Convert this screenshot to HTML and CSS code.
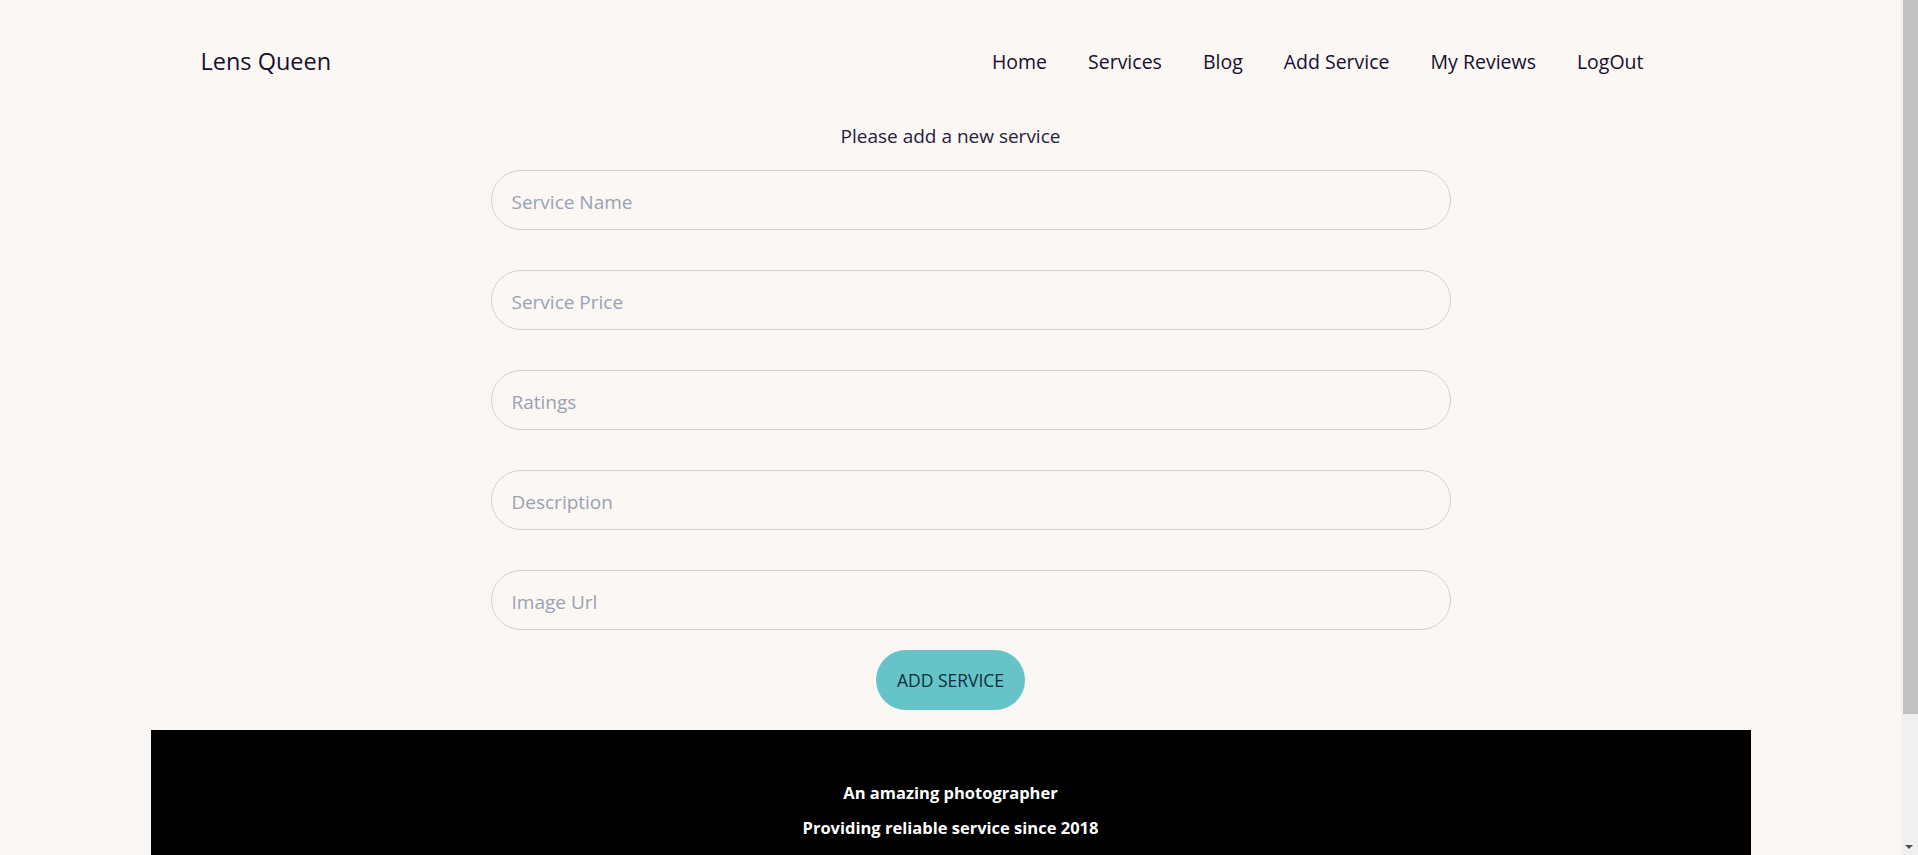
FILE: index.html
```html
<!DOCTYPE html>
<html lang="en">
<head>
<meta charset="utf-8">
<title>Lens Queen - Add Service</title>
<link rel="stylesheet" href="styles.css">
</head>
<body>
<div class="page">
  <header class="navbar">
    <a class="brand" href="#">Lens Queen</a>
    <nav class="menu">
      <a href="#">Home</a>
      <a href="#">Services</a>
      <a href="#">Blog</a>
      <a href="#">Add Service</a>
      <a href="#">My Reviews</a>
      <a href="#">LogOut</a>
    </nav>
  </header>
  <main class="content">
    <p class="title">Please add a new service</p>
    <form class="form">
      <input class="field" type="text" placeholder="Service Name">
      <input class="field" type="text" placeholder="Service Price">
      <input class="field" type="text" placeholder="Ratings">
      <input class="field" type="text" placeholder="Description">
      <input class="field" type="text" placeholder="Image Url">
      <button class="submit" type="button">ADD SERVICE</button>
    </form>
  </main>
  <footer class="footer">
    <p>An amazing photographer</p>
    <p>Providing reliable service since 2018</p>
  </footer>
</div>
<div class="scrollbar" aria-hidden="true">
  <div class="scroll-thumb"></div>
  <div class="scroll-arrow"></div>
</div>
</body>
</html>
```

FILE: styles.css
```css
* { box-sizing: border-box; }
html, body {
  margin: 0;
  padding: 0;
  background: #faf7f5;
}
body {
  font-family: "Open Sans", "Noto Sans", sans-serif;
  color: #1c1631;
  padding-right: 17px;
}
.page {
  max-width: 1600px;
  margin: 0 auto;
}
.navbar {
  display: flex;
  align-items: center;
  justify-content: space-between;
  height: 80px;
  margin-top: 21px;
  padding: 0 107px 0 50px;
}
.brand {
  font-size: 23.5px;
  color: #170f2c;
  text-decoration: none;
}
.menu {
  display: flex;
  gap: 41px;
}
.menu a {
  font-size: 19.5px;
  font-weight: 500;
  color: #170f2c;
  text-decoration: none;
}
.content {
  display: flex;
  flex-direction: column;
  align-items: center;
}
.title {
  margin: 20px 0 19px;
  font-size: 19px;
  line-height: 30px;
  color: #25223a;
}
.form {
  width: 1000px;
  display: flex;
  flex-direction: column;
  align-items: center;
  gap: 40px;
}
.field {
  width: 960px;
  height: 60px;
  margin-left: 40px;
  padding: 4px 20px 0;
  border: 1px solid #d3cfd0;
  border-radius: 30px;
  background: transparent;
  font-family: inherit;
  font-size: 19px;
  color: #1c1631;
  outline: none;
}
.field::placeholder {
  color: #9ca1b0;
}
.submit {
  margin-top: -20px;
  height: 60px;
  padding: 0 21px;
  border: none;
  border-radius: 30px;
  background: #66c3c8;
  color: #0f2e3a;
  font-family: inherit;
  font-size: 17.5px;
  cursor: pointer;
}
.footer {
  margin-top: 20px;
  background: #000;
  color: #fff;
  text-align: center;
  font-weight: 700;
  font-size: 16.5px;
  padding: 50px 0 174px;
}
.footer p {
  margin: 0 0 9px;
  line-height: 26px;
}
.scrollbar {
  position: fixed;
  top: 0;
  right: 0;
  width: 17px;
  height: 100vh;
  background: #f0f0f0;
}
.scroll-thumb {
  margin-left: 2px;
  height: 714px;
  background: #c1c1c1;
}
.scroll-arrow {
  position: absolute;
  left: 4px;
  bottom: 6px;
  width: 0;
  height: 0;
  border-left: 4px solid transparent;
  border-right: 4px solid transparent;
  border-top: 4px solid #505050;
}
```
